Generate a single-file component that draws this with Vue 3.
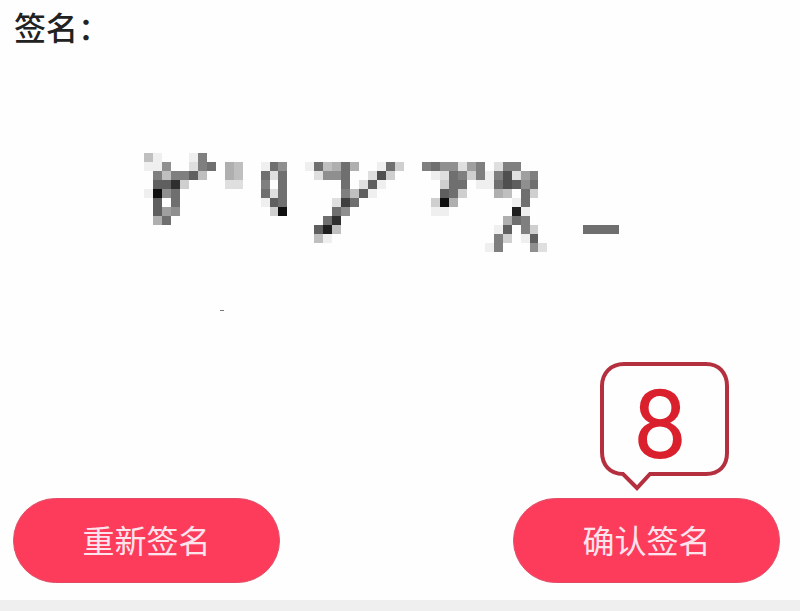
<template>
  <main class="sign-page">
    <h1 class="title">签名：</h1>

    <div class="pad">
      <svg class="strokes" viewBox="0 0 53 18" preserveAspectRatio="none" shape-rendering="crispEdges" role="img" aria-label="手写签名">
        <rect
          v-for="cell in cells"
          :key="cell.id"
          :x="cell.x"
          :y="cell.y"
          width="1"
          height="1"
          :fill="cell.color"
        />
        <rect x="8.5" y="17.4" width="0.4" height="0.15" fill="#777" />
      </svg>
    </div>

    <div class="actions">
      <button class="btn" type="button">重新签名</button>
      <div class="confirm">
        <div class="callout">
          <svg class="bubble" viewBox="0 0 132 132" aria-hidden="true">
            <path d="M25 3H107C120 3 128 12 128 25V92C128 105 120 113 107 113H51L38 127L24 113C11 113 3 104 3 91V25C3 12 12 3 25 3Z" />
          </svg>
          <span class="step">8</span>
        </div>
        <button class="btn" type="button">确认签名</button>
      </div>
    </div>

    <div class="bottom-bar"></div>
  </main>
</template>

<script setup>
import { computed } from "vue";

// 每一行的笔迹：[行, 起始列, 深浅(十六进制)]
const runs = [
  [0, 0, "41...18"],
  [1, 0, "117..289.54"],
  [1, 13, "197"],
  [1, 18, "194595..193"],
  [1, 31, "8977268.288"],
  [2, 1, "8488a4..54"],
  [2, 13, "929"],
  [2, 19, "2779..2b3"],
  [2, 32, "12983818b268"],
  [3, 1, "aad3....22"],
  [3, 13, "8.9"],
  [3, 22, "9.2a1"],
  [3, 33, "399.119ba79"],
  [4, 0, "1f79"],
  [4, 13, "929"],
  [4, 22, "84a1"],
  [4, 33, "a93...54.93"],
  [5, 1, "a.9"],
  [5, 13, "1a9"],
  [5, 21, "2c9"],
  [5, 32, "3f5......19"],
  [6, 1, "a67"],
  [6, 14, "3f"],
  [6, 21, "97"],
  [6, 32, "11.......e1"],
  [7, 1, "59"],
  [7, 20, "9d"],
  [7, 40, "598"],
  [8, 19, "ae4"],
  [8, 39, "1a.83"],
  [8, 49, "9999"],
  [9, 19, "41"],
  [9, 39, "83.1a"],
  [10, 38, "18...72"],
];

const cells = computed(() =>
  runs.flatMap(([row, start, levels]) =>
    [...levels]
      .map((level, i) => {
        const gray = 255 - parseInt(level, 16) * 16;
        return {
          id: `${row}-${start + i}`,
          x: start + i,
          y: row,
          level,
          color: `rgb(${gray}, ${gray}, ${gray})`,
        };
      })
      .filter((cell) => cell.level !== ".")
  )
);
</script>

<style>
body {
  margin: 0;
  background: #fefefe;
}
</style>

<style scoped>
.sign-page {
  font-family: "Noto Sans CJK SC", sans-serif;
  color: #222;
}

.title {
  margin: 0;
  padding: 2px 14px 0;
  font-size: 32px;
  line-height: 48px;
  font-weight: 500;
}

.pad {
  padding: 103px 22% 183px 18%;
}

.strokes {
  display: block;
  width: 99%;
  height: 162px;
}

.actions {
  display: flex;
  justify-content: space-between;
  padding: 0 20px 17px 13px;
}

.confirm {
  position: relative;
}

.btn {
  display: block;
  width: 267px;
  height: 85px;
  padding: 0 0 4px;
  border: 1px solid #e04c66;
  border-radius: 43px;
  background: #fd3c5c;
  color: #fde4ec;
  font-family: inherit;
  font-size: 32px;
  font-weight: 400;
  cursor: pointer;
}

.callout {
  position: absolute;
  left: 86px;
  bottom: 90px;
  display: flex;
  justify-content: center;
  width: 122px;
  height: 132px;
}

.bubble {
  position: absolute;
  top: 0;
  left: 0;
  width: 132px;
  height: 132px;
}

.bubble path {
  fill: #fefefe;
  stroke: #b5303f;
  stroke-width: 4;
}

.step {
  position: relative;
  color: #d9202c;
  font-family: Roboto, sans-serif;
  font-size: 96px;
  line-height: 128px;
}

.bottom-bar {
  height: 11px;
  background: #efefef;
}
</style>
